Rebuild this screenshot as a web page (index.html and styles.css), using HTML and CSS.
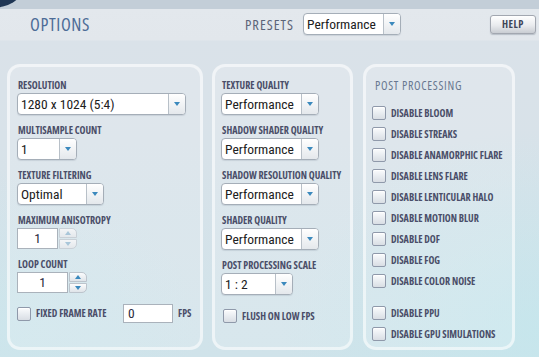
FILE: index.html
```html
<!DOCTYPE html>
<html>
<head>
<meta charset="utf-8">
<title>Options</title>
<link rel="stylesheet" href="styles.css">
</head>
<body>
<div class="app">
  <header class="header">
    <h1 class="title">OPTIONS</h1>
    <span class="presets-label">PRESETS</span>
    <div class="select w-presets"><span class="val">Performance</span><span class="btn"><i class="arrow"></i></span></div>
    <div class="spacer"></div>
    <button class="help">HELP</button>
  </header>

  <main class="panels">
    <section class="panel panel-a">
      <div class="field">
        <div class="label">RESOLUTION</div>
        <div class="select w-res"><span class="val">1280 x 1024 (5:4)</span><span class="btn"><i class="arrow"></i></span></div>
      </div>
      <div class="field">
        <div class="label">MULTISAMPLE COUNT</div>
        <div class="select w-ms"><span class="val">1</span><span class="btn"><i class="arrow"></i></span></div>
      </div>
      <div class="field">
        <div class="label">TEXTURE FILTERING</div>
        <div class="select w-tf"><span class="val">Optimal</span><span class="btn"><i class="arrow"></i></span></div>
      </div>
      <div class="field">
        <div class="label">MAXIMUM ANISOTROPY</div>
        <div class="spin disabled w-aniso">
          <span class="spin-val">1</span>
          <span class="spin-btns"><span class="spin-btn up"><i class="arrow-up"></i></span><span class="spin-btn down"><i class="arrow"></i></span></span>
        </div>
      </div>
      <div class="field">
        <div class="label">LOOP COUNT</div>
        <div class="spin w-loop">
          <span class="spin-val">1</span>
          <span class="spin-btns"><span class="spin-btn up"><i class="arrow-up"></i></span><span class="spin-btn down"><i class="arrow"></i></span></span>
        </div>
      </div>
      <div class="check-row fixed-row">
        <span class="box"></span>
        <span class="clabel fixed-label">FIXED FRAME RATE</span>
        <span class="text-input">0</span>
        <span class="clabel">FPS</span>
      </div>
    </section>

    <section class="panel panel-b">
      <div class="field">
        <div class="label">TEXTURE QUALITY</div>
        <div class="select w-perf"><span class="val">Performance</span><span class="btn"><i class="arrow"></i></span></div>
      </div>
      <div class="field">
        <div class="label">SHADOW SHADER QUALITY</div>
        <div class="select w-perf"><span class="val">Performance</span><span class="btn"><i class="arrow"></i></span></div>
      </div>
      <div class="field">
        <div class="label">SHADOW RESOLUTION QUALITY</div>
        <div class="select w-perf"><span class="val">Performance</span><span class="btn"><i class="arrow"></i></span></div>
      </div>
      <div class="field">
        <div class="label">SHADER QUALITY</div>
        <div class="select w-perf"><span class="val">Performance</span><span class="btn"><i class="arrow"></i></span></div>
      </div>
      <div class="field">
        <div class="label">POST PROCESSING SCALE</div>
        <div class="select w-scale"><span class="val">1 : 2</span><span class="btn"><i class="arrow"></i></span></div>
      </div>
      <div class="check-row flush-row">
        <span class="box"></span>
        <span class="clabel">FLUSH ON LOW FPS</span>
      </div>
    </section>

    <section class="panel panel-c">
      <h2 class="pp-title">POST PROCESSING</h2>
      <div class="check-list">
        <div class="check-row"><span class="box"></span><span class="clabel">DISABLE BLOOM</span></div>
        <div class="check-row"><span class="box"></span><span class="clabel">DISABLE STREAKS</span></div>
        <div class="check-row"><span class="box"></span><span class="clabel">DISABLE ANAMORPHIC FLARE</span></div>
        <div class="check-row"><span class="box"></span><span class="clabel">DISABLE LENS FLARE</span></div>
        <div class="check-row"><span class="box"></span><span class="clabel">DISABLE LENTICULAR HALO</span></div>
        <div class="check-row"><span class="box"></span><span class="clabel">DISABLE MOTION BLUR</span></div>
        <div class="check-row"><span class="box"></span><span class="clabel">DISABLE DOF</span></div>
        <div class="check-row"><span class="box"></span><span class="clabel">DISABLE FOG</span></div>
        <div class="check-row"><span class="box"></span><span class="clabel">DISABLE COLOR NOISE</span></div>
        <div class="check-row sep"><span class="box"></span><span class="clabel">DISABLE PPU</span></div>
        <div class="check-row"><span class="box"></span><span class="clabel">DISABLE GPU SIMULATIONS</span></div>
      </div>
    </section>
  </main>
</div>
</body>
</html>
```

FILE: styles.css
```css
html, body {
  margin: 0;
  padding: 0;
}

body {
  font-family: "Open Sans", "Liberation Sans", sans-serif;
  font-stretch: 75%;
  background: #d6e1e8;
}

.app {
  position: relative;
  width: 539px;
  height: 357px;
  overflow: hidden;
  background:
    radial-gradient(ellipse 260px 200px at 540px 330px, rgba(190, 232, 238, 0.55), rgba(190, 232, 238, 0) 100%),
    radial-gradient(ellipse 200px 160px at 0px 330px, rgba(200, 232, 238, 0.45), rgba(200, 232, 238, 0) 100%),
    linear-gradient(to bottom, #c3ced8 0, #c3ced8 9px, #e3e8ed 9px, #e2e7ec 40px, #dae2e9 41px, #d8e2e9 140px, #d0e3ea 357px);
}

.app::before {
  content: "";
  position: absolute;
  left: -40px;
  top: -30px;
  width: 62px;
  height: 38px;
  border-radius: 50%;
  background: #1f3654;
}

/* ---------- header ---------- */
.header {
  display: flex;
  align-items: center;
  height: 48px;
  padding: 0 3px 0 30px;
  box-sizing: border-box;
}

.title {
  margin: 0;
  width: 215px;
  font-size: 18px;
  font-weight: 400;
  letter-spacing: 0.6px;
  line-height: 22px;
  color: #4d6c97;
}

.presets-label {
  width: 58px;
  font-size: 14.5px;
  letter-spacing: 1px;
  color: #5b6478;
  padding-top: 1px;
}

.spacer {
  flex: 1;
}

.help {
  width: 46px;
  height: 19px;
  padding: 0;
  border: 1px solid #a2a7b0;
  border-radius: 3px;
  background: linear-gradient(#ffffff, #e9ebee 55%, #c9cdd3);
  box-shadow: 0 1px 1px rgba(60, 70, 90, 0.25);
  font-family: inherit;
  font-stretch: 75%;
  font-size: 10.5px;
  letter-spacing: 0.5px;
  font-weight: 700;
  color: #3f4558;
}

/* ---------- select ---------- */
.select {
  display: flex;
  height: 22px;
  box-sizing: border-box;
  border: 1px solid #a5aeb8;
  border-radius: 4px;
  background: #fff;
  overflow: hidden;
  box-shadow: 0 1px 1px rgba(80, 95, 115, 0.15);
}

.select .val {
  flex: 1;
  padding-left: 3px;
  font-family: Roboto, "Liberation Sans", sans-serif;
  font-stretch: 75%;
  font-size: 13.5px;
  line-height: 20px;
  color: #202020;
  white-space: nowrap;
}

.select .btn {
  width: 16px;
  border-left: 1px solid #b8c0c8;
  background: linear-gradient(#ffffff, #e4e8ec);
  display: flex;
  align-items: center;
  justify-content: center;
}

.arrow {
  display: block;
  width: 0;
  height: 0;
  border-left: 3.5px solid transparent;
  border-right: 3.5px solid transparent;
  border-top: 4px solid #3b89bd;
}

.arrow-up {
  display: block;
  width: 0;
  height: 0;
  border-left: 3.5px solid transparent;
  border-right: 3.5px solid transparent;
  border-bottom: 4px solid #3b89bd;
}

.w-presets { width: 98px; }
.w-res { width: 169px; }
.w-ms { width: 60px; }
.w-tf { width: 87px; }
.w-perf { width: 98px; }
.w-scale { width: 72px; }

/* ---------- panels ---------- */
.panels {
  display: flex;
  align-items: flex-start;
  gap: 9px;
  padding: 16px 0 0 7px;
}

.panel {
  box-sizing: border-box;
  height: 286px;
  border: 3px solid rgba(255, 255, 255, 0.55);
  border-radius: 13px;
  background: rgba(255, 255, 255, 0.16);
  padding: 13px 0 0 7px;
  display: flex;
  flex-direction: column;
  gap: 10px;
}

.panel-a { width: 196px; }
.panel-b { width: 141px; padding-left: 6px; }
.panel-c { width: 152px; margin-left: 1px; padding-left: 6px; gap: 0; }

.field {
  display: flex;
  flex-direction: column;
  gap: 2px;
}

.label {
  font-size: 10px;
  font-weight: 700;
  line-height: 11px;
  color: #4a4e68;
  padding-left: 1px;
  white-space: nowrap;
}

/* ---------- spinner ---------- */
.spin {
  display: flex;
  height: 21px;
}

.spin-val {
  box-sizing: border-box;
  border: 1px solid #aab2bb;
  background: #fff;
  text-align: center;
  font-family: Roboto, "Liberation Sans", sans-serif;
  font-stretch: 75%;
  font-size: 13.5px;
  line-height: 19px;
  color: #2a2a40;
}

.w-aniso .spin-val { width: 41px; }
.w-loop .spin-val { width: 51px; }

.spin-btns {
  display: flex;
  flex-direction: column;
  gap: 1px;
  width: 18px;
  margin-left: 1px;
}

.spin-btn {
  flex: 1;
  box-sizing: border-box;
  border: 1px solid #bcc4cc;
  background: linear-gradient(#fbfcfd, #dfe4e9);
  display: flex;
  align-items: center;
  justify-content: center;
}

.spin-btn.up { border-radius: 0 5px 0 0; }
.spin-btn.down { border-radius: 0 0 5px 0; }

.spin.disabled .spin-btn {
  background: linear-gradient(#f3f5f7, #e4e8ec);
  border-color: #c9d0d7;
}

.spin.disabled .arrow { border-top-color: #a9c6d9; }
.spin.disabled .arrow-up { border-bottom-color: #a9c6d9; }

/* ---------- checkboxes ---------- */
.check-row {
  display: flex;
  align-items: center;
  height: 14px;
}

.box {
  flex: none;
  width: 14px;
  height: 14px;
  box-sizing: border-box;
  border: 1px solid #8f99aa;
  border-radius: 2px;
  background: linear-gradient(#fbfcfd, #e9edf1 50%, #d9dee4);
  box-shadow: inset 0 1px 0 #fff;
}

.clabel {
  margin-left: 5px;
  font-size: 10px;
  font-weight: 700;
  line-height: 13px;
  color: #4a4e68;
  white-space: nowrap;
}

.fixed-row {
  margin-top: 1px;
  height: 19px;
}

.fixed-label {
  width: 82px;
}

.text-input {
  box-sizing: border-box;
  width: 50px;
  height: 19px;
  margin-left: 5px;
  padding-left: 4px;
  border: 1px solid #aab2bb;
  background: #fff;
  font-family: Roboto, "Liberation Sans", sans-serif;
  font-stretch: 75%;
  font-size: 13.5px;
  line-height: 17px;
  color: #2a2a40;
}

.flush-row {
  margin-top: 4px;
  padding-left: 2px;
}

.pp-title {
  margin: 0 0 0 3px;
  font-size: 12px;
  letter-spacing: 0.7px;
  font-weight: 400;
  line-height: 12px;
  color: #687890;
}

.check-list {
  display: flex;
  flex-direction: column;
  gap: 7px;
  margin-top: 14px;
}

.check-row.sep {
  margin-top: 11px;
}
```
